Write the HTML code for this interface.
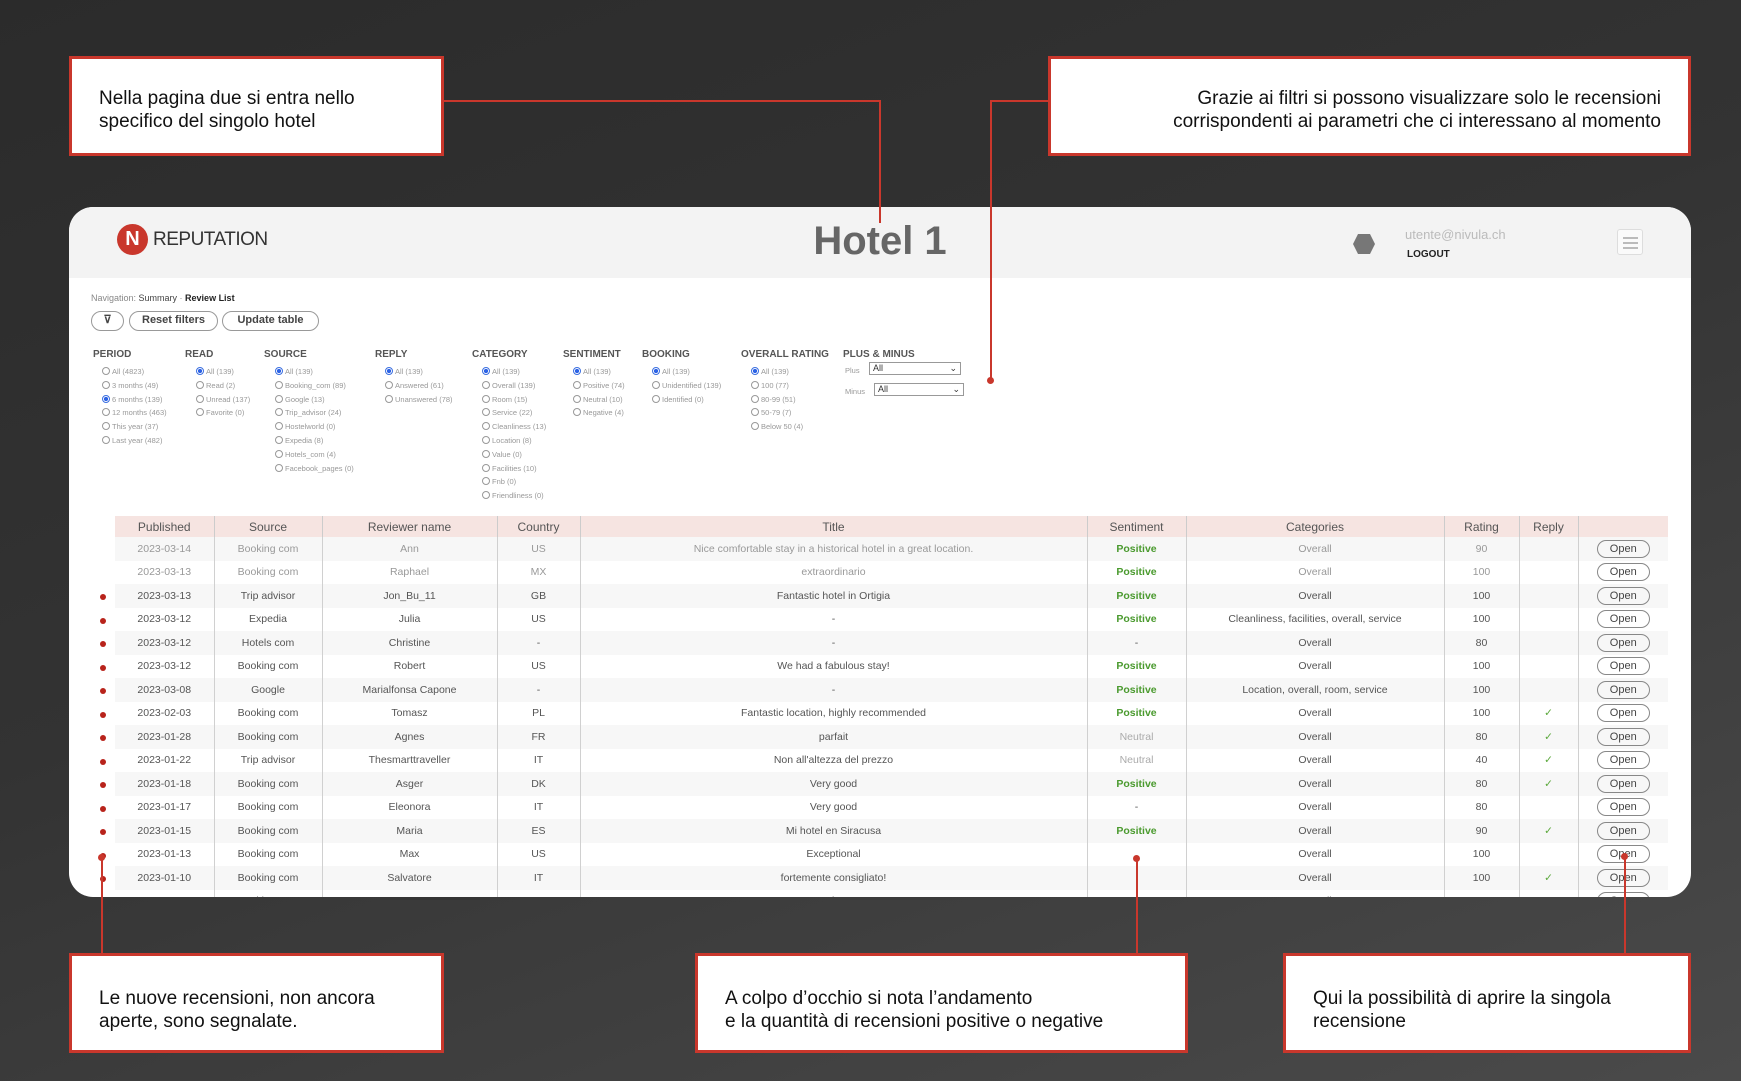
<!DOCTYPE html>
<html><head><meta charset="utf-8">
<style>
*{margin:0;padding:0;box-sizing:border-box}
body{width:1741px;height:1081px;overflow:hidden;background:linear-gradient(160deg,#2b2b2b 0%,#333 45%,#4a4a4a 100%);font-family:"Liberation Sans",sans-serif;position:relative}
.box{position:absolute;background:#fff;border:3px solid #c9372c;font-size:19px;line-height:23px;color:#111}
.ln{position:absolute;background:#c9372c}
.card{position:absolute;left:69px;top:207px;width:1622px;height:690px;background:#fff;border-radius:24px;overflow:hidden}
.hdr{position:absolute;left:0;top:0;width:100%;height:71px;background:#f3f3f3}
.abs{position:absolute}
.btn{position:absolute;top:104px;height:20px;border:1.5px solid #999;border-radius:10px;font-size:11px;color:#444;text-align:center;line-height:17px;font-weight:bold}
.fh{position:absolute;top:142px;font-size:10px;font-weight:bold;color:#555}
.fl{position:absolute;font-size:7.5px;color:#999;white-space:nowrap}
.fl i{display:inline-block;width:8px;height:8px;border:1px solid #999;border-radius:50%;vertical-align:-1px;margin-right:2px}
.fl i.s{border-color:#3b6fe0;background:radial-gradient(#2d63e6 45%,#fff 55%)}
table{position:absolute;left:46px;top:309px;width:1553px;border-collapse:collapse;table-layout:fixed;font-size:10.5px;text-align:center}
th{height:21px;background:#f6e4e1;color:#555;font-weight:normal;font-size:12px;border-left:1px solid #ccc}
td{height:23.5px;color:#555;border-left:1px solid #d0d0d0;white-space:nowrap;overflow:visible}
th:first-child,td:first-child{border-left:none}
tr:nth-child(even) td{background:#f7f7f7}
tr.l td{color:#999}
.p{color:#4a9a2e;font-weight:bold}
.n{color:#aaa}
.o{display:inline-block;width:53px;height:18px;border:1.5px solid #888;border-radius:9px;line-height:16px;color:#444;font-size:11px;vertical-align:middle}
.ck{color:#5aa83a}
.dot{position:absolute;left:31px;width:6px;height:6px;border-radius:50%;background:#b8231b}
</style></head><body>

<div class="box" style="left:69px;top:56px;width:375px;height:100px;padding:28px 0 0 27px">Nella pagina due si entra nello<br>specifico del singolo hotel</div>
<div class="box" style="left:1048px;top:56px;width:643px;height:100px;padding:28px 27px 0 0;text-align:right">Grazie ai filtri si possono visualizzare solo le recensioni<br>corrispondenti ai parametri che ci interessano al momento</div>

<div class="card">
 <div class="hdr"></div>
 <div class="abs" style="left:48px;top:17px;width:31px;height:31px;border-radius:50%;background:#c9372c;color:#fff;font-size:20px;font-weight:bold;text-align:center;line-height:31px">N</div>
 <div class="abs" style="left:84px;top:22px;font-size:19px;color:#333;letter-spacing:-0.5px">REPUTATION</div>
 <div class="abs" style="left:0;width:1622px;top:12px;text-align:center;font-size:40px;font-weight:bold;color:#666">Hotel 1</div>
 <svg class="abs" style="left:1284px;top:27px" width="22" height="20" viewBox="0 0 22 20"><polygon points="5,0 17,0 22,10 17,20 5,20 0,10" fill="#777"/></svg>
 <div class="abs" style="left:1336px;top:20px;font-size:13px;color:#bbb">utente@nivula.ch</div>
 <div class="abs" style="left:1338px;top:42px;font-size:10px;font-weight:bold;color:#222">LOGOUT</div>
 <div class="abs" style="left:1548px;top:22px;width:26px;height:26px;border:1px solid #ddd;border-radius:3px;background:#fafafa">
  <div class="abs" style="left:5px;top:7px;width:15px;height:1.5px;background:#bbb"></div>
  <div class="abs" style="left:5px;top:12px;width:15px;height:1.5px;background:#bbb"></div>
  <div class="abs" style="left:5px;top:17px;width:15px;height:1.5px;background:#bbb"></div>
 </div>
 <div class="abs" style="left:22px;top:86px;font-size:9px;color:#888">Navigation: <span style="color:#444">Summary</span> · <b style="color:#222">Review List</b></div>
 <div class="btn" style="left:22px;width:33px">⊽</div>
 <div class="btn" style="left:60px;width:89px">Reset filters</div>
 <div class="btn" style="left:153px;width:97px">Update table</div>

 <div class="fh" style="left:24px">PERIOD</div>
 <div class="fh" style="left:116px">READ</div>
 <div class="fh" style="left:195px">SOURCE</div>
 <div class="fh" style="left:306px">REPLY</div>
 <div class="fh" style="left:403px">CATEGORY</div>
 <div class="fh" style="left:494px">SENTIMENT</div>
 <div class="fh" style="left:573px">BOOKING</div>
 <div class="fh" style="left:672px">OVERALL RATING</div>
 <div class="fh" style="left:774px">PLUS &amp; MINUS</div>

 <div class="fl" style="left:33px;top:158px;line-height:13.8px"><i></i>All (4823)<br><i></i>3 months (49)<br><i class="s"></i>6 months (139)<br><i></i>12 months (463)<br><i></i>This year (37)<br><i></i>Last year (482)</div>
 <div class="fl" style="left:127px;top:158px;line-height:13.8px"><i class="s"></i>All (139)<br><i></i>Read (2)<br><i></i>Unread (137)<br><i></i>Favorite (0)</div>
 <div class="fl" style="left:206px;top:158px;line-height:13.8px"><i class="s"></i>All (139)<br><i></i>Booking_com (89)<br><i></i>Google (13)<br><i></i>Trip_advisor (24)<br><i></i>Hostelworld (0)<br><i></i>Expedia (8)<br><i></i>Hotels_com (4)<br><i></i>Facebook_pages (0)</div>
 <div class="fl" style="left:316px;top:158px;line-height:13.8px"><i class="s"></i>All (139)<br><i></i>Answered (61)<br><i></i>Unanswered (78)</div>
 <div class="fl" style="left:413px;top:158px;line-height:13.8px"><i class="s"></i>All (139)<br><i></i>Overall (139)<br><i></i>Room (15)<br><i></i>Service (22)<br><i></i>Cleanliness (13)<br><i></i>Location (8)<br><i></i>Value (0)<br><i></i>Facilities (10)<br><i></i>Fnb (0)<br><i></i>Friendliness (0)</div>
 <div class="fl" style="left:504px;top:158px;line-height:13.8px"><i class="s"></i>All (139)<br><i></i>Positive (74)<br><i></i>Neutral (10)<br><i></i>Negative (4)</div>
 <div class="fl" style="left:583px;top:158px;line-height:13.8px"><i class="s"></i>All (139)<br><i></i>Unidentified (139)<br><i></i>Identified (0)</div>
 <div class="fl" style="left:682px;top:158px;line-height:13.8px"><i class="s"></i>All (139)<br><i></i>100 (77)<br><i></i>80-99 (51)<br><i></i>50-79 (7)<br><i></i>Below 50 (4)</div>
 <div class="fl" style="left:776px;top:159px">Plus</div>
 <div class="abs" style="left:800px;top:155px;width:92px;height:13px;border:1px solid #999;font-size:9px;padding-left:3px;color:#333">All<span style="position:absolute;right:3px;top:0">⌄</span></div>
 <div class="fl" style="left:776px;top:180px">Minus</div>
 <div class="abs" style="left:805px;top:176px;width:90px;height:13px;border:1px solid #999;font-size:9px;padding-left:3px;color:#333">All<span style="position:absolute;right:3px;top:0">⌄</span></div>

 <div class="dot" style="top:387px"></div><div class="dot" style="top:411px"></div><div class="dot" style="top:434px"></div><div class="dot" style="top:458px"></div><div class="dot" style="top:481px"></div><div class="dot" style="top:505px"></div><div class="dot" style="top:528px"></div><div class="dot" style="top:552px"></div><div class="dot" style="top:575px"></div><div class="dot" style="top:599px"></div><div class="dot" style="top:622px"></div><div class="dot" style="top:646px"></div><div class="dot" style="top:669px"></div>

 <table>
 <colgroup><col style="width:99px"><col style="width:108px"><col style="width:175px"><col style="width:83px"><col style="width:507px"><col style="width:99px"><col style="width:258px"><col style="width:75px"><col style="width:59px"><col style="width:90px"></colgroup>
 <tr><th>Published</th><th>Source</th><th>Reviewer name</th><th>Country</th><th>Title</th><th>Sentiment</th><th>Categories</th><th>Rating</th><th>Reply</th><th></th></tr>
 <tr class="l"><td>2023-03-14</td><td>Booking com</td><td>Ann</td><td>US</td><td>Nice comfortable stay in a historical hotel in a great location.</td><td class="p" style="color:#4a9a2e">Positive</td><td>Overall</td><td>90</td><td></td><td><span class="o">Open</span></td></tr>
 <tr class="l"><td>2023-03-13</td><td>Booking com</td><td>Raphael</td><td>MX</td><td>extraordinario</td><td class="p" style="color:#4a9a2e">Positive</td><td>Overall</td><td>100</td><td></td><td><span class="o">Open</span></td></tr>
 <tr><td>2023-03-13</td><td>Trip advisor</td><td>Jon_Bu_11</td><td>GB</td><td>Fantastic hotel in Ortigia</td><td class="p">Positive</td><td>Overall</td><td>100</td><td></td><td><span class="o">Open</span></td></tr>
 <tr><td>2023-03-12</td><td>Expedia</td><td>Julia</td><td>US</td><td>-</td><td class="p">Positive</td><td>Cleanliness, facilities, overall, service</td><td>100</td><td></td><td><span class="o">Open</span></td></tr>
 <tr><td>2023-03-12</td><td>Hotels com</td><td>Christine</td><td>-</td><td>-</td><td>-</td><td>Overall</td><td>80</td><td></td><td><span class="o">Open</span></td></tr>
 <tr><td>2023-03-12</td><td>Booking com</td><td>Robert</td><td>US</td><td>We had a fabulous stay!</td><td class="p">Positive</td><td>Overall</td><td>100</td><td></td><td><span class="o">Open</span></td></tr>
 <tr><td>2023-03-08</td><td>Google</td><td>Marialfonsa Capone</td><td>-</td><td>-</td><td class="p">Positive</td><td>Location, overall, room, service</td><td>100</td><td></td><td><span class="o">Open</span></td></tr>
 <tr><td>2023-02-03</td><td>Booking com</td><td>Tomasz</td><td>PL</td><td>Fantastic location, highly recommended</td><td class="p">Positive</td><td>Overall</td><td>100</td><td class="ck">✓</td><td><span class="o">Open</span></td></tr>
 <tr><td>2023-01-28</td><td>Booking com</td><td>Agnes</td><td>FR</td><td>parfait</td><td class="n">Neutral</td><td>Overall</td><td>80</td><td class="ck">✓</td><td><span class="o">Open</span></td></tr>
 <tr><td>2023-01-22</td><td>Trip advisor</td><td>Thesmarttraveller</td><td>IT</td><td>Non all'altezza del prezzo</td><td class="n">Neutral</td><td>Overall</td><td>40</td><td class="ck">✓</td><td><span class="o">Open</span></td></tr>
 <tr><td>2023-01-18</td><td>Booking com</td><td>Asger</td><td>DK</td><td>Very good</td><td class="p">Positive</td><td>Overall</td><td>80</td><td class="ck">✓</td><td><span class="o">Open</span></td></tr>
 <tr><td>2023-01-17</td><td>Booking com</td><td>Eleonora</td><td>IT</td><td>Very good</td><td>-</td><td>Overall</td><td>80</td><td></td><td><span class="o">Open</span></td></tr>
 <tr><td>2023-01-15</td><td>Booking com</td><td>Maria</td><td>ES</td><td>Mi hotel en Siracusa</td><td class="p">Positive</td><td>Overall</td><td>90</td><td class="ck">✓</td><td><span class="o">Open</span></td></tr>
 <tr><td>2023-01-13</td><td>Booking com</td><td>Max</td><td>US</td><td>Exceptional</td><td></td><td>Overall</td><td>100</td><td></td><td><span class="o">Open</span></td></tr>
 <tr><td>2023-01-10</td><td>Booking com</td><td>Salvatore</td><td>IT</td><td>fortemente consigliato!</td><td></td><td>Overall</td><td>100</td><td class="ck">✓</td><td><span class="o">Open</span></td></tr>
 <tr><td>2023-01-09</td><td>Booking com</td><td>Luca</td><td>IT</td><td>Ottimo</td><td></td><td>Overall</td><td>100</td><td></td><td><span class="o">Open</span></td></tr>
 </table>
</div>

<div class="ln" style="left:444px;top:100px;width:437px;height:2px"></div>
<div class="ln" style="left:879px;top:100px;width:2px;height:123px"></div>
<div class="ln" style="left:990px;top:100px;width:58px;height:2px"></div>
<div class="ln" style="left:990px;top:100px;width:2px;height:280px"></div>
<div class="abs" style="left:987px;top:377px;width:7px;height:7px;border-radius:50%;background:#c9372c"></div>
<div class="ln" style="left:101px;top:857px;width:2px;height:96px"></div>
<div class="abs" style="left:98px;top:854px;width:7px;height:7px;border-radius:50%;background:#c9372c"></div>
<div class="ln" style="left:1136px;top:858px;width:2px;height:95px"></div>
<div class="abs" style="left:1133px;top:855px;width:7px;height:7px;border-radius:50%;background:#c9372c"></div>
<div class="ln" style="left:1624px;top:856px;width:2px;height:97px"></div>
<div class="abs" style="left:1621px;top:853px;width:7px;height:7px;border-radius:50%;background:#c9372c"></div>

<div class="box" style="left:69px;top:953px;width:375px;height:100px;padding:31px 0 0 27px">Le nuove recensioni, non ancora<br>aperte, sono segnalate.</div>
<div class="box" style="left:695px;top:953px;width:493px;height:100px;padding:31px 0 0 27px">A colpo d’occhio si nota l’andamento<br>e la quantità di recensioni positive o negative</div>
<div class="box" style="left:1283px;top:953px;width:408px;height:100px;padding:31px 0 0 27px">Qui la possibilità di aprire la singola<br>recensione</div>
</body></html>
